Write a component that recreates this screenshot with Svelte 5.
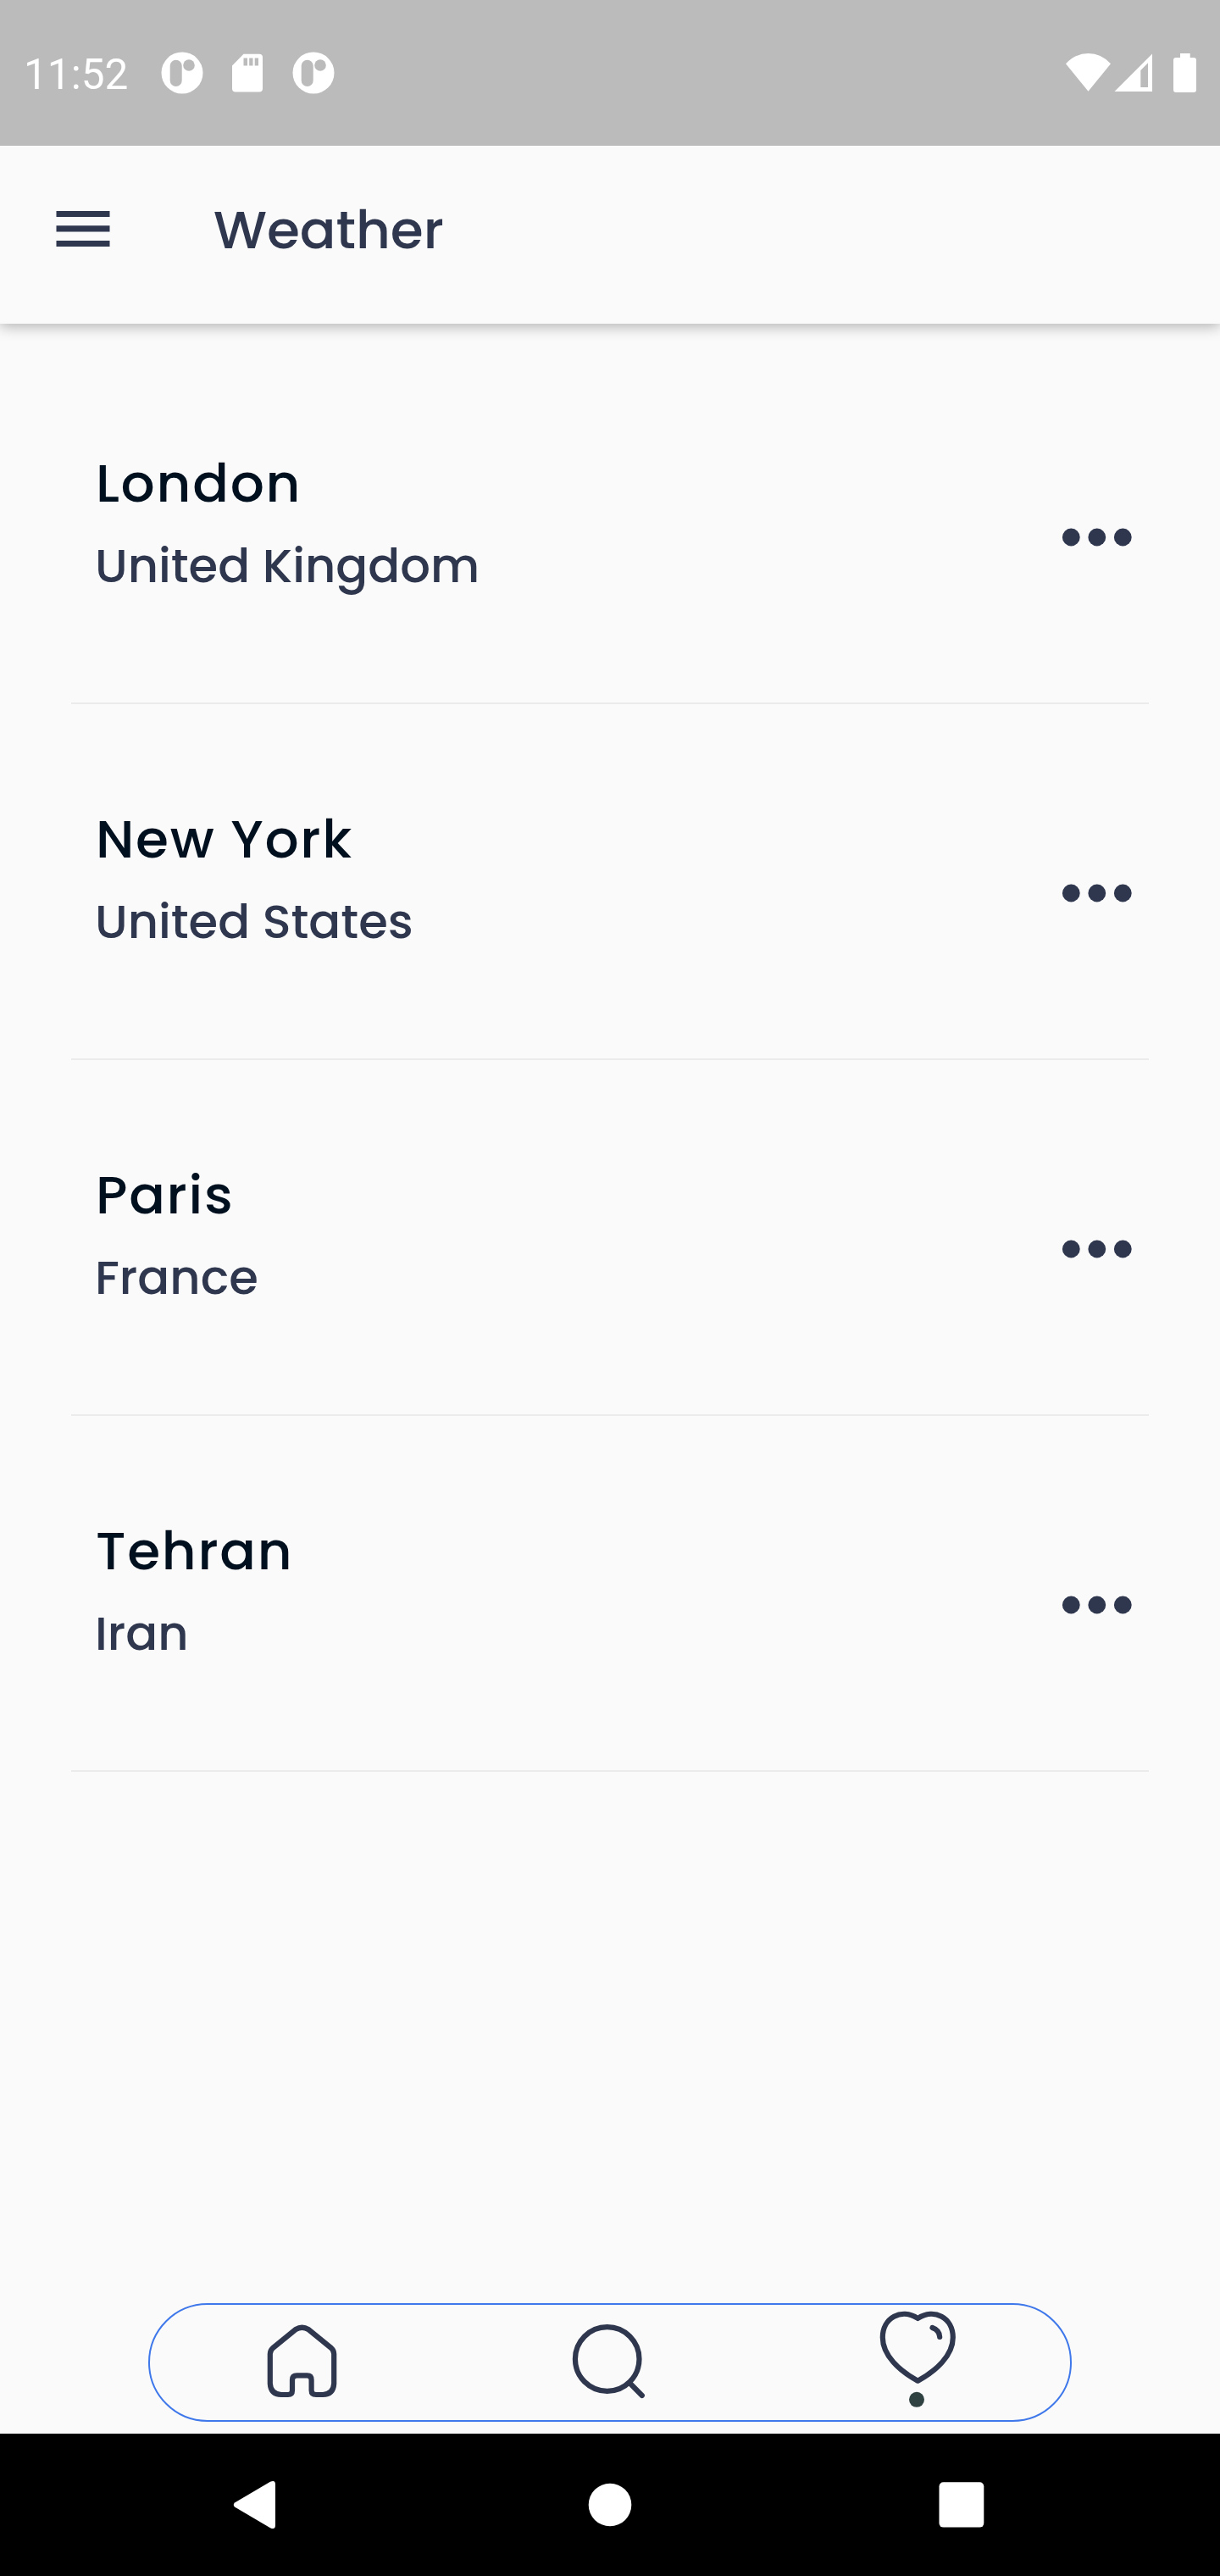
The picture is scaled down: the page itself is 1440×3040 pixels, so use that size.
<script>
  const places = [
    { city: 'London', country: 'United Kingdom' },
    { city: 'New York', country: 'United States' },
    { city: 'Paris', country: 'France' },
    { city: 'Tehran', country: 'Iran' }
  ];
</script>

{#snippet badge()}
  <svg class="badge" width="50" height="50" viewBox="0 0 50 50" aria-hidden="true">
    <circle cx="25" cy="25" r="24.5" fill="#fff" />
    <rect x="10.7" y="9.7" width="14" height="31.3" rx="7" fill="#bbb" />
    <circle cx="33" cy="16" r="6.8" fill="#bbb" />
  </svg>
{/snippet}

<div class="screen">
  <div class="status">
    <span class="time">11:52</span>
    {@render badge()}
    <svg class="sd" width="36" height="46" viewBox="0 0 36 46" aria-hidden="true">
      <path fill="#fff" fill-rule="evenodd" d="M13.5 .8H32a4 4 0 0 1 4 4V41.500a4 4 0 0 1-4 4H4a4 4 0 0 1-4-4V14.500ZM13.500 5.500V14.500H18V5.500ZM20.200 5.500V14.500H24.500V5.500ZM26.700 5.500V14.500H31V5.500Z" />
    </svg>
    {@render badge()}
    <svg class="signals" width="154" height="48" viewBox="1258 62 154 48" aria-hidden="true">
      <g fill="#fff">
        <path d="M1258 75.300Q1269 63 1284.500 63T1311 75.300L1284.500 107.700Z" />
        <path fill-rule="evenodd" d="M1315.500 108L1360 63.500V108ZM1346.300 83V103H1355V74.300Z" />
        <path d="M1393 63H1404.700V68H1409a3 3 0 0 1 3 3V106a3 3 0 0 1-3 3H1388a3 3 0 0 1-3-3V71a3 3 0 0 1 3-3H1393Z" />
      </g>
    </svg>
  </div>

  <header>
    <svg class="menu" width="64" height="44" viewBox="0 0 64 44" aria-hidden="true">
      <path fill="#2f374e" d="M.5 1H63.500V8H.5ZM.5 18.300H63.500V25.600H.5ZM.5 36H63.500V43H.5Z" />
    </svg>
    <h1>Weather</h1>
  </header>

  <main>
    {#each places as place}
      <article>
        <div class="names">
          <h2>{place.city}</h2>
          <p>{place.country}</p>
        </div>
        <svg class="more" width="84" height="22" viewBox="0 0 84 22" aria-hidden="true">
          <g fill="#2f374e">
            <circle cx="11.300" cy="11" r="10.400" />
            <circle cx="41.800" cy="11" r="10.400" />
            <circle cx="72.300" cy="11" r="10.400" />
          </g>
        </svg>
      </article>
    {/each}
  </main>

  <nav class="tabs">
    <svg width="1086" height="136" viewBox="177 2720 1086 136" aria-hidden="true">
      <g fill="none" stroke="#2f374e" stroke-width="6.2" stroke-linecap="round" stroke-linejoin="round">
        <path d="M349 2749L322 2771Q318.800 2774 318.800 2778V2813Q319.500 2825.500 332 2826H340Q345 2826 345 2821V2808.500Q345 2803.300 350.500 2803.300H362.500Q367.600 2803.300 367.600 2808.500V2821Q367.600 2826 373 2826H381Q393.500 2825.500 394.200 2813V2778Q394.200 2774 391 2771L364 2749Q356.500 2744.500 349 2749Z" />
        <circle cx="716.700" cy="2784" r="37.800" />
        <path d="M743.500 2812.500L757.800 2827" />
        <path d="M1083.300 2736C1064 2723.500 1041.800 2735 1041.800 2758.500C1041.800 2780 1062 2798 1083.300 2809.700C1104.600 2798 1124.800 2780 1124.800 2758.500C1124.800 2735 1102.600 2723.500 1083.300 2736ZM1100.500 2747Q1109 2750 1109.200 2758" />
      </g>
      <circle cx="1082" cy="2831.800" r="9" fill="#2f4140" />
    </svg>
  </nav>

  <footer>
    <svg width="1440" height="168" viewBox="0 2872 1440 168" aria-hidden="true">
      <g fill="#fff">
        <path d="M277 2953.500L319 2928.800Q325 2926 325 2932V2980Q325 2986 319 2983.200L277 2958.500Q274.500 2956 277 2953.500Z" />
        <circle cx="720" cy="2956" r="25.300" />
        <rect x="1108.500" y="2929.300" width="52.800" height="53.300" rx="5" />
      </g>
    </svg>
  </footer>
</div>

<style>
  :global(body) {
    margin: 0;
    background: #fafafa;
  }
  .screen {
    width: 1440px;
    height: 3040px;
    display: flex;
    flex-direction: column;
    overflow: hidden;
    background: #fafafa;
    font-family: Poppins, Inter, sans-serif;
  }
  svg {
    display: block;
    flex: none;
  }
  .status {
    box-sizing: border-box;
    height: 172px;
    flex: none;
    display: flex;
    align-items: center;
    padding: 0 28px;
    background: #bbb;
  }
  .time {
    width: 162.300px;
    padding-top: 4px;
    color: #fff;
    font: 400 49.500px/60px Roboto, sans-serif;
  }
  .sd {
    margin: 0 34.300px 0 34.200px;
  }
  .signals {
    margin-left: auto;
  }
  header {
    box-sizing: border-box;
    height: 210px;
    flex: none;
    display: flex;
    align-items: center;
    padding: 0 66px 14px;
    box-shadow: 0 3px 16px rgba(0, 0, 0, 0.3);
    clip-path: inset(0 0 -40px 0);
  }
  h1,
  h2,
  p {
    margin: 0;
    white-space: nowrap;
  }
  h1 {
    margin-left: 122px;
    padding-top: 2px;
    color: #2f374e;
    font-size: 63px;
    font-weight: 500;
    line-height: 80px;
  }
  main {
    flex: 1;
    padding: 29px 84px 0;
  }
  article {
    box-sizing: border-box;
    height: 420px;
    display: flex;
    justify-content: space-between;
    align-items: flex-start;
    padding: 119px 19px 0 28px;
    border-bottom: 2px solid #ebebeb;
  }
  .names {
    display: flex;
    flex-direction: column;
    gap: 18px;
  }
  h2 {
    padding-left: 0.900px;
    color: #00101f;
    font-size: 63px;
    font-weight: 500;
    line-height: 80px;
    letter-spacing: 1.750px;
  }
  p {
    color: #2f374e;
    font-size: 56px;
    font-weight: 500;
    line-height: 80px;
  }
  .more {
    margin-top: 93px;
  }
  .tabs {
    box-sizing: border-box;
    width: 1090px;
    height: 140px;
    flex: none;
    margin: 0 auto 14px;
    border: 2px solid #3f78ea;
    border-radius: 70px;
  }
  footer {
    height: 168px;
    flex: none;
    background: #000;
  }
</style>
